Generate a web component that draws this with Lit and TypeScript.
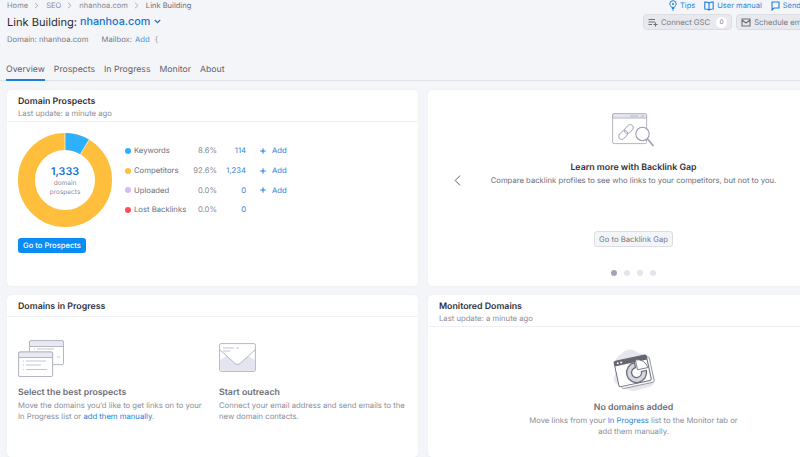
import { LitElement, html, css, svg } from "lit";
import { customElement } from "lit/decorators.js";

const legend = [
  { c: "#2bb1ff", l: "Keywords", p: "8.6%", n: "114", add: true },
  { c: "#ffbf3c", l: "Competitors", p: "92.6%", n: "1,234", add: true },
  { c: "#d9b8f5", l: "Uploaded", p: "0.0%", n: "0", add: true },
  { c: "#ff4d5e", l: "Lost Backlinks", p: "0.0%", n: "0", add: false },
];

const gray = "#b4b6c6";

@customElement("app-root")
export class AppRoot extends LitElement {
  static styles = css`
    :host { display: block; width: 800px; height: 457px; overflow: hidden; background: #f4f5f9; font-family: Inter, "Liberation Sans", sans-serif; color: #6c6e79; font-size: 7.7px; text-rendering: geometricPrecision; }
    a { color: #1a80dc; text-decoration: none; }
    .top { display: flex; justify-content: space-between; height: 61px; padding-left: 7px; }
    .crumbs { display: flex; height: 11px; align-items: center; font-size: 7.55px; color: #8a8c97; }
    .crumbs .sep { width: 6px; margin: 0 6px; display: flex; }
    .crumbs .cur { color: #6c6e79; }
    .title { display: flex; align-items: center; margin-top: 3px; height: 15px; font-size: 11.1px; color: #292a33; }
    .title a { font-size: 10.8px; font-weight: 500; margin-left: 3px; color: #1672cf; }
    .title svg { margin-left: 4px; }
    .meta { display: flex; margin-top: 4px; font-size: 7.7px; height: 12px; align-items: center; color: #777985; }
    .meta .mail { margin-left: 13px; }
    .meta a { margin-left: 3px; color: #4494e0; }
    .meta i { margin-left: 5px; font-style: normal; color: #9a9ca6; }
    .tools { width: 157px; flex: none; overflow: hidden; }
    .links { display: flex; gap: 9px; height: 11px; align-items: center; padding-left: 26px; white-space: nowrap; font-size: 7.5px; }
    .links a { display: flex; align-items: center; gap: 3px; color: #2a85dc; }
    .btns { display: flex; gap: 4px; margin-top: 3px; width: 240px; }
    .tbtn { flex: none; display: flex; align-items: center; height: 16px; box-sizing: border-box; border: 1px solid #dcdde3; background: #e8e9ee; border-radius: 4px; padding: 0 4px 0 4px; font-size: 7.7px; color: #777985; gap: 3px; white-space: nowrap; }
    .tbtn b { display: flex; align-items: center; justify-content: center; width: 11px; height: 11px; border-radius: 50%; background: #fff; font-weight: 400; font-size: 6.5px; margin-left: 3px; }
    .tabs { display: flex; gap: 9px; height: 19px; padding-left: 6px; border-bottom: 1px solid #dfe1e7; font-size: 8.7px; color: #5d5f6a; box-sizing: content-box; }
    .tabs span { height: 17px; padding-bottom: 1px; display: flex; align-items: center; margin-bottom: -1px; }
    .tabs .on { border-bottom: 2px solid #1b7fdb; }
    .grid { display: grid; grid-template-columns: 411px 411px; grid-template-rows: 196px 162px; gap: 9px 10px; padding: 9px 0 0 7px; width: 840px; }
    .card { background: #fff; border-radius: 4px; box-shadow: 0 0 1px rgba(120,125,150,.25); overflow: hidden; display: flex; flex-direction: column; }
    .hd { padding: 6px 11px 0; border-bottom: 1px solid #eff0f4; box-sizing: border-box; flex: none; }
    .hd.two { height: 32px; }
    .hd.one { height: 22px; }
    h3 { margin: 0; font-size: 8.8px; line-height: 12px; font-weight: 600; color: #2f3039; }
    .hd p { margin: 0; font-size: 7.7px; line-height: 11px; color: #8b8d98; }
    .dp { padding: 11px 11px 0; display: flex; flex-direction: column; }
    .row { display: flex; }
    .donut { display: grid; width: 94px; height: 94px; flex: none; }
    .donut > * { grid-area: 1 / 1; }
    .dc { display: flex; flex-direction: column; align-items: center; justify-content: center; padding-top: 1px; line-height: 9px; font-size: 6.5px; color: #8e909b; text-align: center; }
    .dc strong { font-size: 10.7px; line-height: 14px; font-weight: 600; color: #1672cf; }
    .legend { display: flex; flex-direction: column; margin: 8px 0 0 14px; }
    .li { display: flex; align-items: center; height: 19.7px; font-size: 7.7px; color: #6c6e79; }
    .dot { width: 6px; height: 6px; border-radius: 50%; flex: none; margin-right: 3px; margin-left: -1px; }
    .li .lb { width: 56px; white-space: nowrap; }
    .li .pc { width: 27px; text-align: right; color: #888a95; }
    .li .nm { width: 29px; text-align: right; color: #2a85dc; }
    .li .ad { display: flex; align-items: center; margin-left: 14px; color: #1a80dc; gap: 6px; }
    .go { align-self: flex-start; margin-top: 11px; height: 15px; width: 68px; border-radius: 3px; background: #0a8cf5; color: #fff; font-size: 7.6px; font-weight: 500; display: flex; align-items: center; justify-content: center; }
    .car { display: grid; grid-template-columns: 1fr; justify-items: center; align-content: start; height: 100%; position: relative; }
    .car .ill { margin-top: 23px; height: 36px; display: flex; }
    .car h3 { margin-top: 13px; color: #2f3039; }
    .car p { margin: 1px 0 0; font-size: 7.7px; line-height: 12px; color: #6c6e79; white-space: nowrap; }
    .car .chev { position: absolute; left: 26px; top: 85px; display: flex; }
    .gbtn { margin-top: 44px; height: 16px; width: 79px; box-sizing: border-box; border: 1px solid #dcdde3; border-radius: 3px; background: #f4f5f8; font-size: 7.7px; color: #777985; display: flex; align-items: center; justify-content: center; white-space: nowrap; }
    .dots { display: flex; gap: 7px; margin-top: 23px; }
    .dots span { width: 6px; height: 6px; border-radius: 50%; background: #e4e5ea; }
    .dots .on { background: #a2a4b4; }
    .two-col { display: grid; grid-template-columns: 201px 1fr; padding: 23px 11px 0; }
    .two-col .ico { height: 38px; display: flex; align-items: flex-end; }
    .two-col h4, .empty h4 { margin: 0; font-size: 8.8px; line-height: 12px; font-weight: 600; color: #6c6e79; }
    .two-col h4 { margin-top: 9px; }
    .two-col p, .empty p { margin: 1px 0 0; font-size: 7.7px; line-height: 11px; color: #8b8d98; }
    .mailico { margin-bottom: 6px; }
    .empty { display: flex; flex-direction: column; align-items: center; padding-top: 22px; text-align: center; }
    .empty h4 { margin-top: 10px; }
    .empty a { color: #2a85dc; }
  `;

  private donut() {
    const R = 38.5, C = 2 * Math.PI * R, f = 0.086;
    return html`<svg width="94" height="94" viewBox="0 0 94 94">
      <g transform="rotate(-90 47 47)" fill="none" stroke-width="17">
        <circle cx="47" cy="47" r=${R} stroke="#ffbf3c"></circle>
        <circle cx="47" cy="47" r=${R} stroke="#2bb1ff" stroke-dasharray="${C * f} ${C}"></circle>
      </g>
      <line x1="47" y1="0" x2="47" y2="17" stroke="#fff" stroke-width=".7"></line>
      <line x1="71.2" y1="6.6" x2="62.5" y2="21" stroke="#fff" stroke-width=".7"></line>
    </svg>`;
  }

  private sep() {
    return html`<span class="sep"><svg width="5" height="7" viewBox="0 0 5 7"><path d="M1 .8 3.9 3.5 1 6.2" fill="none" stroke="#9a9ca6" stroke-width=".8"/></svg></span>`;
  }

  render() {
    return html`
      <div class="top">
        <div>
          <div class="crumbs"><span>Home</span>${this.sep()}<span>SEO</span>${this.sep()}<span>nhanhoa.com</span>${this.sep()}<span class="cur">Link Building</span></div>
          <div class="title">Link Building: <a>nhanhoa.com</a>
            <svg width="7" height="5" viewBox="0 0 7 5"><path d="M.8 1 3.5 3.7 6.2 1" fill="none" stroke="#1672cf" stroke-width="1.2"/></svg></div>
          <div class="meta"><span>Domain: nhanhoa.com</span><span class="mail">Mailbox:</span><a>Add</a><i>{</i></div>
        </div>
        <div class="tools">
          <div class="links">
            <a><svg width="8" height="11" viewBox="0 0 8 11"><path d="M4 .7a3.2 3.2 0 0 0-3.2 3.2C.8 5.3 2 6 2.6 7.4h2.8C6 6 7.2 5.300 7.200 3.900A3.200 3.200 0 0 0 4 .7ZM2.800 8.500h2.400M3.200 10h1.600" fill="none" stroke="#1a80dc" stroke-width="1"/><circle cx="4" cy="3.900" r="1" fill="#1a80dc"/></svg>Tips</a>
            <a><svg width="10" height="10" viewBox="0 0 10 10"><path d="M5 2C4 1.200 2.500 1 .8 1v7c1.700 0 3.200.2 4.200 1 1-.8 2.500-1 4.200-1V1C7.500 1 6 1.200 5 2Zm0 0v7" fill="none" stroke="#1a80dc" stroke-width="1.100"/></svg>User manual</a>
            <a><svg width="9" height="10" viewBox="0 0 9 10"><path d="M1 1h7v6H3L1 9Z" fill="none" stroke="#1a80dc" stroke-width="1.100"/></svg>Send feedback</a>
          </div>
          <div class="btns">
            <div class="tbtn"><svg width="10" height="9" viewBox="0 0 10 9"><path d="M.5 1.500h6.500M.5 4h6.500M.5 6.500h3.500M7.500 4.500v4M5.500 6.500h4" stroke="#6c6e79" stroke-width="1" fill="none"/></svg><span>Connect GSC</span><b>0</b></div>
            <div class="tbtn"><svg width="10" height="9" viewBox="0 0 10 9"><path d="M1 1h8v7H1ZM1 2l4 3 4-3" fill="none" stroke="#6c6e79" stroke-width="1.100"/></svg><span>Schedule email report</span></div>
          </div>
        </div>
      </div>
      <div class="tabs"><span class="on">Overview</span><span>Prospects</span><span>In Progress</span><span>Monitor</span><span>About</span></div>
      <div class="grid">
        <section class="card">
          <div class="hd two"><h3>Domain Prospects</h3><p>Last update: a minute ago</p></div>
          <div class="dp">
            <div class="row">
              <div class="donut">${this.donut()}<div class="dc"><strong>1,333</strong>domain<br>prospects</div></div>
              <div class="legend">
                ${legend.map((r) => html`<div class="li"><span class="dot" style="background:${r.c}"></span><span class="lb">${r.l}</span><span class="pc">${r.p}</span><span class="nm">${r.n}</span>
                  ${r.add ? html`<span class="ad"><svg width="6" height="6" viewBox="0 0 6 6"><path d="M3 .3v5.400M.3 3h5.400" stroke="#1a80dc" stroke-width="1"/></svg>Add</span>` : ""}</div>`)}
              </div>
            </div>
            <a class="go">Go to Prospects</a>
          </div>
        </section>
        <section class="card">
          <div class="car">
            <span class="chev"><svg width="7" height="11" viewBox="0 0 7 11"><path d="M6 .6 1.200 5.500 6 10.400" fill="none" stroke="#5d5f6a" stroke-width="1"/></svg></span>
            <div class="ill">${this.linkIcon()}</div>
            <h3>Learn more with Backlink Gap</h3>
            <p>Compare backlink profiles to see who links to your competitors, but not to you.</p>
            <div class="gbtn">Go to Backlink Gap</div>
            <div class="dots"><span class="on"></span><span></span><span></span><span></span></div>
          </div>
        </section>
        <section class="card">
          <div class="hd one"><h3>Domains in Progress</h3></div>
          <div class="two-col">
            <div>
              <div class="ico">${this.pagesIcon()}</div>
              <h4>Select the best prospects</h4>
              <p>Move the domains you’d like to get links on to your<br>In Progress list or <a>add them manually</a>.</p>
            </div>
            <div>
              <div class="ico">${this.mailIcon()}</div>
              <h4>Start outreach</h4>
              <p>Connect your email address and send emails to the<br>new domain contacts.</p>
            </div>
          </div>
        </section>
        <section class="card">
          <div class="hd two"><h3>Monitored Domains</h3><p>Last update: a minute ago</p></div>
          <div class="empty">
            ${this.monitorIcon()}
            <h4>No domains added</h4>
            <p>Move links from your <a>In Progress</a> list to the Monitor tab or<br>add them manually.</p>
          </div>
        </section>
      </div>`;
  }

  private linkIcon() {
    return html`<svg width="44" height="36" viewBox="0 0 44 36" fill="none">
      <rect x=".6" y=".6" width="34" height="30" rx="1.500" fill="#fff" stroke="${gray}" stroke-width="1"/>
      <path d="M.6 2.100a1.500 1.500 0 0 1 1.500-1.500h31a1.500 1.500 0 0 1 1.500 1.500V5H.6Z" fill="#e4e5ee" stroke="${gray}" stroke-width="1"/>
      <path d="M18 3h8M29 3h3" stroke="${gray}" stroke-width="1"/>
      <g transform="rotate(-45 14 19)" stroke="${gray}" stroke-width="1">
        <rect x="5" y="16" width="10" height="6" rx="3"/><rect x="13" y="16" width="10" height="6" rx="3"/>
      </g>
      <circle cx="30.500" cy="21" r="6.700" fill="#fff" stroke="#9c9eb0" stroke-width="1.100"/>
      <path d="M35.500 26 41.500 33" stroke="#9c9eb0" stroke-width="1.600"/>
    </svg>`;
  }

  private pagesIcon() {
    return html`<svg width="47" height="38" viewBox="0 0 47 38" fill="none" stroke="${gray}">
      <rect x="11.500" y=".6" width="34" height="24" rx="1.500" fill="#fff" stroke-width="1"/>
      <path d="M11.500 6.500V2.100a1.500 1.500 0 0 1 1.500-1.500h31a1.500 1.500 0 0 1 1.500 1.500v4.400Z" fill="#e8e9f1" stroke-width="1"/>
      <path d="M16 9h1M19 9h17M39 17h3" stroke-width=".8"/>
      <rect x=".6" y="12" width="34" height="24.500" rx="1.500" fill="#fff" stroke-width="1.100"/>
      <path d="M.6 17.500v-4a1.500 1.500 0 0 1 1.500-1.500h31a1.500 1.500 0 0 1 1.500 1.500v4Z" fill="#e8e9f1" stroke-width="1.100"/>
      <path d="M5 21h1M8 21h20M5 25h1M8 25h15M5 29.500h1M8 29.500h21" stroke-width=".8"/>
    </svg>`;
  }

  private mailIcon() {
    return html`<svg class="mailico" width="37" height="29" viewBox="0 0 37 29" fill="none">
      <rect x=".6" y=".6" width="35.800" height="27.800" rx="1.500" fill="#fff" stroke="${gray}" stroke-width="1"/>
      <path d="M1 28 1 17 14 9 18.500 19 23 9 36 17V28Z" fill="#e4e5ee"/>
      <path d="M1 7 15.500 20a4 4 0 0 0 6 0L36 7" fill="#fff" stroke="${gray}" stroke-width="1"/>
      <path d="M4 5h11M17 5h3M4 8h7" stroke="${gray}" stroke-width=".8"/>
    </svg>`;
  }

  private monitorIcon() {
    return svg`<svg width="44" height="43" viewBox="0 0 44 43" fill="none">
      <path d="M18 .5c4 0 7 3 10 4 5 1 9 2 10 7 1 5 1 8 3 12 2 5 3 10-1 13-4 3-8 2-12 4-5 2-10 2-14-1-4-2-10-3-12-8-1-4 2-7 2-11 0-6-2-9 2-13 4-4 8-7 12-7Z" fill="#e6e7ee"/>
      <g transform="rotate(-12 22 21)">
        <rect x="6.500" y="11" width="33" height="26" rx="1.500" fill="#f6f6f9" stroke="#8a8c98" stroke-width=".8"/>
        <rect x="4" y="8.500" width="33" height="26" rx="1.500" fill="#fff" stroke="#6c6e79" stroke-width="1"/>
        <path d="M4 10A1.500 1.500 0 0 1 5.500 8.500h30A1.500 1.500 0 0 1 37 10v3.500H4Z" fill="#63656f"/>
        <circle cx="7.500" cy="11" r="1" fill="#fff"/><circle cx="11" cy="11" r="1" fill="#fff"/>
        <path d="M24 14a10 10 0 1 0 10 10h-5a5 5 0 1 1-5-5Z" fill="#d4d5de" stroke="#6c6e79" stroke-width="1.300"/>
        <path d="M25.500 11.500v10h10.500a10.500 10.500 0 0 0-10.500-10Z" fill="#fff" stroke="#6c6e79" stroke-width=".8"/>
      </g>
    </svg>`;
  }
}
